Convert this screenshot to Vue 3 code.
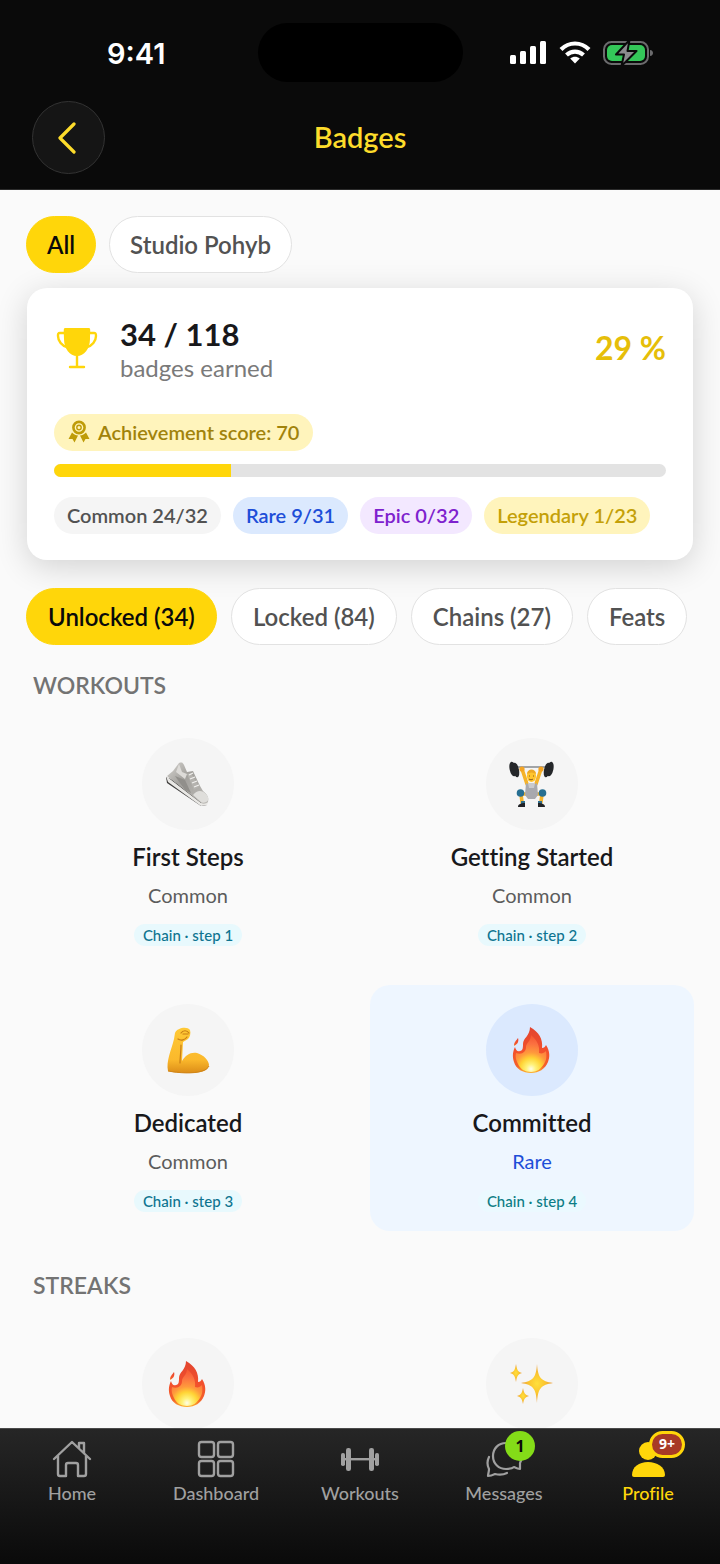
<template>
  <div class="screen">
    <svg class="defs" width="0" height="0" aria-hidden="true">
      <defs>
        <linearGradient id="flame" x1="0" y1="0" x2="0" y2="1">
          <stop offset="0" stop-color="#e2452f" />
          <stop offset="0.5" stop-color="#f2502c" />
          <stop offset="0.85" stop-color="#f4602a" />
          <stop offset="1" stop-color="#ffb42e" />
        </linearGradient>
        <radialGradient id="flame-core" gradientUnits="userSpaceOnUse" cx="23" cy="43" r="34">
          <stop offset="0" stop-color="#fffde8" />
          <stop offset="0.14" stop-color="#fff27a" />
          <stop offset="0.32" stop-color="#ffd435" />
          <stop offset="0.48" stop-color="#ff9a3c" />
          <stop offset="0.75" stop-color="#fb6f40" />
          <stop offset="1" stop-color="#f4552f" />
        </radialGradient>
        <linearGradient id="skin" x1="0" y1="0" x2="0" y2="1">
          <stop offset="0" stop-color="#ffc935" />
          <stop offset="0.7" stop-color="#fbb92c" />
          <stop offset="1" stop-color="#dc8d18" />
        </linearGradient>
        <radialGradient id="star">
          <stop offset="0" stop-color="#ffe03c" />
          <stop offset="0.5" stop-color="#fbc52f" />
          <stop offset="1" stop-color="#e89a3c" />
        </radialGradient>
        <linearGradient id="shoe-side" x1="0" y1="0" x2="1" y2="1">
          <stop offset="0" stop-color="#d6d4d0" />
          <stop offset="0.4" stop-color="#a3a19d" />
          <stop offset="1" stop-color="#bdbbb7" />
        </linearGradient>
      </defs>
      <symbol id="emoji-fire" viewBox="0 0 48 48">
        <path fill="url(#flame)" d="M22 1c9 5 13 12 12 21 2 0 3-1 4-3 4 6 4 12 2 17-3 7-9 11-17 11S8 43 6 36c-2-6-1-11 1-15 1 3 2 5 5 4 3 0 3-4 3-7 0-6 7-8 7-17z" />
        <path fill="url(#flame)" d="M10 12c1 3 0 6-4 8 0-4 2-5 4-8z" />
        <path fill="url(#flame-core)" d="M23 9c6 5 9 11 8 18 3 1 5 0 7-2 1 6 0 10-2 13-3 5-7 8-13 8s-11-3-13-8c-2-4-3-7-2-11 6 2 10-1 10-6 0-4 5-6 5-12z" />
      </symbol>
      <symbol id="emoji-shoe" viewBox="0 0 48 48">
        <path fill="#3c3b3a" d="m2 17 1 6 34 23 6-1-36-26z" />
        <path fill="#e9e8e5" d="m2 16 35 27 7-1-1 3-6 1L4 22z" />
        <path fill="url(#shoe-side)" d="M3 16 9 11l6-8c3-1 4 0 5 2l3 7 6-1c4 8 6 14 10 20 5 4 6 7 5 11-2 2-5 2-7 1z" />
        <path fill="#dddbd8" d="m15 4 3 8 5 2-2 5-9-7z" />
        <path fill="#918f8b" d="m11 16 10 4 6 13-6-3z" />
        <path fill="#b5b3af" d="m23 14 4-1 8 14-5 3z" />
        <path fill="#dfdedb" d="M29 35c4-5 9-5 13-1 3 3 3 7 0 8-2 1-4 1-5 0z" />
        <path fill="none" stroke="#f1f0ee" stroke-width="1.200" d="m25 15 4-2m-3 6 5-2m-3 6 5-2m-3 6 5-2" />
      </symbol>
      <symbol id="emoji-lifter" viewBox="0 0 48 48">
        <path stroke="#85898c" stroke-width="1.400" d="M4 7h40" />
        <g fill="#25272a">
          <ellipse cx="5" cy="9" rx="3.400" ry="7.500" transform="rotate(-12 5 9)" />
          <ellipse cx="8" cy="10" rx="3" ry="7.500" transform="rotate(-12 8 10)" />
          <ellipse cx="42" cy="9" rx="3.400" ry="7.500" transform="rotate(12 42 9)" />
          <ellipse cx="39" cy="10" rx="3" ry="7.500" transform="rotate(12 39 10)" />
        </g>
        <path fill="none" stroke="#f5b32a" stroke-width="3.600" stroke-linecap="round" stroke-linejoin="round" d="m14 9 5 15m14-15-5 15M19 34h-6l1 8m14-8h6l-1 8" />
        <circle cx="14" cy="9" r="2.600" fill="#f3a425" />
        <circle cx="33" cy="9" r="2.600" fill="#f3a425" />
        <path fill="#a8a9ae" d="M18 23c3 2 8 2 11 0l1 12-3 4h-7l-3-4z" />
        <path fill="#c9cace" d="M20 23h7l-1 5h-5z" />
        <ellipse cx="23.500" cy="16" rx="4.600" ry="6" fill="#ffc52f" />
        <path fill="#eda825" d="M19 14c0-6 9-6 9 0-3-2-6-2-9 0z" />
        <path fill="none" stroke="#8e5a18" d="M21 16h1m3 0h1m-5 3c1 1 3 1 4 0" />
        <circle cx="12.500" cy="33" r="3.800" fill="#276f92" />
        <circle cx="34.500" cy="33" r="3.800" fill="#276f92" />
        <path fill="#2e6d8b" d="M13 41h4v3h-4zm17 0h4v3h-4z" />
        <path fill="#202226" d="M10 47c0-3 3-4 7-4v4zm20-4c4 0 7 1 7 4h-7z" />
      </symbol>
      <symbol id="emoji-arm" viewBox="0 0 48 48">
        <path fill="url(#skin)" d="M11 7c2-5 12-7 15-3 1 3 0 7-2 9l-5 3-1 19c4-6 8-9 15-8 7 2 12 8 12 12-1 6-8 8-18 8-9 0-16 0-23-2-2-10 3-20 6-32z" />
        <path fill="none" stroke="#c87d15" stroke-width="1.200" stroke-linecap="round" d="M17 7c2-3 6-3 8 0m-6 1h5m-10 5c3 2 7 1 9-2m-6 8c0 7-1 12-1 18" />
        <path fill="none" stroke="#d08518" d="M4 45c11 2 25 3 34 0 4-1 6-3 7-5" />
      </symbol>
      <symbol id="emoji-sparkles" viewBox="0 0 48 48">
        <path fill="url(#star)" d="M29 4c1 14 4 17 16 19-12 2-15 5-16 20-1-15-4-18-16-20 12-2 15-5 16-19z" />
        <path fill="url(#star)" d="M8 4c1 6 2 8 6 9-4 1-5 3-6 9-1-6-2-8-6-9 4-1 5-3 6-9z" />
        <path fill="url(#star)" d="M15 28c1 5 2 7 6 8-4 1-5 3-6 8-1-5-2-7-6-8 4-1 5-3 6-8z" />
      </symbol>
    </svg>

    <header class="top">
      <div class="status">
        <span class="time">9:41</span>
        <span class="island"></span>
        <span class="indicators">
          <svg width="37" height="24" viewBox="0 0 37 24" fill="#fff">
            <rect x="0" y="14" width="6" height="9" rx="1.500" />
            <rect x="10" y="10" width="6" height="13" rx="1.500" />
            <rect x="20" y="5" width="6" height="18" rx="1.500" />
            <rect x="30" y="0" width="6" height="23" rx="1.500" />
          </svg>
          <svg width="32" height="24" viewBox="0 0 32 24" fill="none" stroke="#fff">
            <path stroke-width="4.200" d="M2 8.500C10 .5 22 .5 30 8.500" />
            <path stroke-width="4.200" d="M7.500 14c5-4.600 12-4.600 17 0" />
            <path fill="#fff" stroke="none" d="M11.200 17.600c3-2.400 6.600-2.400 9.600 0L16 22.600z" />
          </svg>
          <svg width="51" height="26" viewBox="0 0 51 26">
            <rect x="1" y="2" width="44" height="22" rx="7.500" fill="none" stroke="#6b6b6d" stroke-width="2" />
            <rect x="4" y="5" width="38" height="16" rx="5" fill="#34c759" />
            <path fill="#6b6b6d" d="M47 10c2 0 3 1.500 3 3s-1 3-3 3z" />
            <path fill="#8b8b8e" stroke="#0a0a0a" stroke-width="2" stroke-linejoin="round" d="M26.500 0 13 14.500h8L18.500 26l15-15h-9z" />
          </svg>
        </span>
      </div>
      <div class="title-bar">
        <button class="back" type="button" aria-label="Back">
          <svg width="20" height="32" viewBox="0 0 20 32" fill="none" stroke="#fddc2b" stroke-width="3.200" stroke-linecap="round" stroke-linejoin="round">
            <path d="M17 2 3 16l14 14" />
          </svg>
        </button>
        <h1>Badges</h1>
      </div>
    </header>

    <main class="content">
      <div class="chips">
        <button v-for="s in studios" :key="s" type="button" class="chip" :class="{ active: s === studio }" @click="studio = s">{{ s }}</button>
      </div>

      <section class="summary">
        <div class="summary-head">
          <svg class="trophy" width="44" height="46" viewBox="0 0 44 46">
            <path fill="#ffd60a" d="M10 3h24c2 0 1 4 1 11 0 10-6 17-13 17S9 24 9 14C9 7 8 3 10 3z" />
            <path fill="none" stroke="#ffd60a" stroke-width="2.400" stroke-linecap="round" d="M10 8H5c-2 0-2 1-2 3 0 5 4 10 9 11M34 8h5c2 0 2 1 2 3 0 5-4 10-9 11M22 30v11m-7 1h14" />
          </svg>
          <div class="count">
            <strong>{{ earned }} / {{ total }}</strong>
            <span>badges earned</span>
          </div>
          <span class="percent">{{ percent }} %</span>
        </div>
        <div class="pill score">
          <svg width="22" height="24" viewBox="0 0 22 24">
            <circle cx="11" cy="7.500" r="5.600" fill="none" stroke="#bf9c09" stroke-width="2.600" />
            <circle cx="11" cy="7.500" r="2.200" fill="none" stroke="#bf9c09" stroke-width="1.400" />
            <path fill="#bf9c09" d="M4 12.500c2 2 4 3 6 3l-3.500 7-2-3.600-4 .1zM18 12.500c-2 2-4 3-6 3l3.500 7 2-3.600 4 .1z" />
          </svg>
          Achievement score: 70
        </div>
        <div class="bar" role="progressbar" :aria-valuenow="percent" aria-valuemin="0" aria-valuemax="100">
          <div class="bar-fill" :style="{ width: percent + '%' }"></div>
        </div>
        <div class="rarities">
          <span v-for="r in rarities" :key="r.name" class="pill" :class="r.name.toLowerCase()">{{ r.name }} {{ r.count }}</span>
        </div>
      </section>

      <div class="chips filters">
        <button v-for="f in filters" :key="f" type="button" class="chip" :class="{ active: f === filter }" @click="filter = f">{{ f }}</button>
      </div>

      <section v-for="group in groups" :key="group.title" class="group">
        <h2>{{ group.title }}</h2>
        <div class="grid">
          <article v-for="b in group.badges" :key="b.icon" class="badge" :class="{ rare: b.rarity === 'Rare' }">
            <div class="medal">
              <svg width="48" height="48"><use :href="'#emoji-' + b.icon" /></svg>
            </div>
            <template v-if="b.name">
              <h3>{{ b.name }}</h3>
              <p>{{ b.rarity }}</p>
              <span class="chain">Chain · step {{ b.step }}</span>
            </template>
          </article>
        </div>
      </section>
    </main>

    <nav class="tabs">
      <a href="#home" class="tab">
        <svg width="40" height="40" viewBox="0 0 40 40" fill="none" stroke="currentColor" stroke-width="2.400" stroke-linecap="round" stroke-linejoin="round">
          <path d="M2 20 20 3l18 17M6 17v18q0 2 2 2h6V26q0-2 2-2h8q2 0 2 2v11h6q2 0 2-2V17M27 9V4h5v10" />
        </svg>
        Home
      </a>
      <a href="#dashboard" class="tab">
        <svg width="40" height="40" viewBox="0 0 40 40" fill="none" stroke="currentColor" stroke-width="2.400">
          <rect x="3" y="3" width="15" height="15" rx="2.500" />
          <rect x="22" y="3" width="15" height="15" rx="2.500" />
          <rect x="3" y="22" width="15" height="15" rx="2.500" />
          <rect x="22" y="22" width="15" height="15" rx="2.500" />
        </svg>
        Dashboard
      </a>
      <a href="#workouts" class="tab">
        <svg width="40" height="40" viewBox="0 0 40 40" fill="currentColor">
          <rect x="1" y="14" width="4" height="13" rx="1.800" />
          <rect x="6" y="9" width="5" height="23" rx="2.200" />
          <rect x="4" y="19" width="32" height="2.400" />
          <rect x="29" y="9" width="5" height="23" rx="2.200" />
          <rect x="35" y="14" width="4" height="13" rx="1.800" />
        </svg>
        Workouts
      </a>
      <a href="#messages" class="tab">
        <svg width="40" height="40" viewBox="0 0 40 40" fill="none" stroke="currentColor" stroke-width="2.200" stroke-linecap="round" stroke-linejoin="round">
          <path d="M22 4C14 4 9 10 9 17c0 8 6 13 13 13 3 0 6 0 8-2 2 1 4 2 6 2v-6c1-2 2-4 2-7C38 10 31 4 22 4z" />
          <path d="M5 18c-2 4-2 8 0 12 0 3-1 5-1 7 3 0 5-1 7-2 4 1 8 1 12-1" />
        </svg>
        <span class="count-dot">1</span>
        Messages
      </a>
      <a href="#profile" class="tab current">
        <svg width="40" height="40" viewBox="0 0 40 40" fill="currentColor">
          <circle cx="20" cy="12" r="9" />
          <path d="M4 36c0-8 7-13 16-13s17 5 17 13q0 2-2 2H6q-2 0-2-2z" />
        </svg>
        <span class="count-tag">9+</span>
        Profile
      </a>
    </nav>
  </div>
</template>

<script setup>
import { computed, ref } from 'vue'

const studios = ['All', 'Studio Pohyb']
const studio = ref('All')

const filters = ['Unlocked (34)', 'Locked (84)', 'Chains (27)', 'Feats']
const filter = ref('Unlocked (34)')

const earned = ref(34)
const total = ref(118)
const percent = computed(() => Math.round((earned.value / total.value) * 100))

const rarities = [
  { name: 'Common', count: '24/32' },
  { name: 'Rare', count: '9/31' },
  { name: 'Epic', count: '0/32' },
  { name: 'Legendary', count: '1/23' },
]

const groups = [
  {
    title: 'WORKOUTS',
    badges: [
      { name: 'First Steps', rarity: 'Common', step: 1, icon: 'shoe' },
      { name: 'Getting Started', rarity: 'Common', step: 2, icon: 'lifter' },
      { name: 'Dedicated', rarity: 'Common', step: 3, icon: 'arm' },
      { name: 'Committed', rarity: 'Rare', step: 4, icon: 'fire' },
    ],
  },
  {
    title: 'STREAKS',
    badges: [{ icon: 'fire' }, { icon: 'sparkles' }],
  },
]
</script>

<style>
body {
  background: #fafafa;
}
</style>

<style scoped>
.screen {
  display: flex;
  flex-direction: column;
  height: 100vh;
  background: #fafafa;
  color: #18181b;
  font-family: Lato, "Liberation Sans", sans-serif;
  font-variant-ligatures: none;
}
.screen * {
  box-sizing: border-box;
}
.defs {
  position: absolute;
}
svg {
  display: block;
  flex: none;
}
button {
  font: inherit;
  font-variant-ligatures: none;
  cursor: pointer;
}
h1, h2, h3, p {
  margin: 0;
}

.top {
  flex: none;
  background: #0a0a0a;
  border-bottom: 1px solid #2c2c2c;
}
.status {
  display: grid;
  grid-template-columns: 1fr 205px 1fr;
  align-items: center;
  padding-top: 23px;
}
.time {
  padding: 2px 0 0 15px;
  text-align: center;
  color: #fff;
  font: 600 29px/36px Inter, sans-serif;
}
.island {
  height: 59px;
  border-radius: 30px;
  background: #000;
}
.indicators {
  display: flex;
  justify-content: center;
  align-items: center;
  gap: 12px;
  padding-right: 18px;
}
.title-bar {
  display: grid;
  grid-template-columns: 73px 1fr 73px;
  align-items: center;
  padding: 19px 32px 15px;
}
.back {
  display: flex;
  align-items: center;
  justify-content: center;
  height: 73px;
  padding: 0 4px 0 0;
  border: 1px solid #333;
  border-radius: 50%;
  background: #151515;
}
h1 {
  padding-bottom: 2px;
  color: #fddc2b;
  font-size: 29px;
  font-weight: 600;
  line-height: 36px;
  text-align: center;
}

.content {
  flex: 1;
  min-height: 0;
  padding: 26px;
  overflow: hidden;
}
.chips {
  display: flex;
  gap: 13px;
}
.chip {
  height: 57px;
  padding: 0 20px 1px;
  border: 1px solid #e2e2e2;
  border-radius: 29px;
  background: #fff;
  color: #525252;
  font-size: 24px;
  font-weight: 600;
  white-space: nowrap;
}
.chip.active {
  border-color: #ffd60a;
  background: #ffd60a;
  color: #0a0a0a;
}
.filters {
  gap: 14px;
  margin: 28px 0 26px;
}
.filters .chip {
  padding: 0 21px 1px;
}

.summary {
  margin: 15px 1px 0;
  padding: 26px 27px;
  border-radius: 20px;
  background: #fff;
  box-shadow: 0 7px 32px rgba(0, 0, 0, 0.16);
}
.summary-head {
  display: flex;
  align-items: center;
  margin-bottom: 32px;
}
.trophy {
  margin: 0 21px 0 1px;
}
.count {
  flex: 1;
  display: flex;
  flex-direction: column;
}
.count strong,
.percent {
  font-size: 32px;
  font-weight: 700;
  line-height: 40px;
}
.count strong {
  font-size: 31px;
}
.count span {
  color: #7a7a7a;
  font-size: 24px;
  line-height: 28px;
}
.percent {
  color: #e6be09;
}
.pill {
  display: flex;
  align-items: center;
  height: 37px;
  padding: 0 13px 2px;
  border-radius: 19px;
  font-size: 20px;
  font-weight: 600;
  white-space: nowrap;
}
.score {
  width: fit-content;
  gap: 8px;
  padding: 0 14px 2px;
  background: #fff4bc;
  color: #a1830b;
}
.bar {
  height: 13px;
  margin: 13px 0 20px;
  border-radius: 7px;
  background: #e3e3e3;
  overflow: hidden;
}
.bar-fill {
  height: 100%;
  background: #ffd60a;
}
.rarities {
  display: flex;
  gap: 12px;
}
.common {
  background: #f5f5f5;
  color: #525252;
}
.pill.rare {
  background: #dbe9fe;
  color: #1d4ed8;
}
.epic {
  background: #f3e8ff;
  color: #7e22ce;
}
.legendary {
  background: #fff4bc;
  color: #c4a008;
}

.group + .group {
  margin-top: 40px;
}
h2 {
  margin: 0 7px 20px;
  color: #737373;
  font-size: 23px;
  font-weight: 600;
  line-height: 28px;
}
.grid {
  display: grid;
  grid-template-columns: 1fr 1fr;
  gap: 20px;
}
.badge {
  display: flex;
  flex-direction: column;
  align-items: center;
  padding: 19px;
  border-radius: 20px;
}
.badge.rare {
  background: #eef6ff;
}
.medal {
  display: flex;
  align-items: center;
  justify-content: center;
  width: 92px;
  height: 92px;
  border-radius: 50%;
  background: #f5f5f5;
}
.rare .medal {
  background: #dbe9fe;
}
h3 {
  margin-top: 11px;
  font-size: 24px;
  font-weight: 600;
  line-height: 32px;
}
.badge p {
  margin: 9px 0 16px;
  color: #5c5c5c;
  font-size: 20px;
  line-height: 26px;
}
.rare p {
  color: #1d4ed8;
}
.chain {
  padding: 0 9px;
  border-radius: 11px;
  background: #e8f9fd;
  color: #0e7490;
  font-size: 15px;
  font-weight: 500;
  line-height: 22px;
}
.rare .chain {
  background: #ebf9ff;
  color: #0d7d85;
}

.tabs {
  display: grid;
  grid-template-columns: repeat(5, 1fr);
  flex: none;
  height: 136px;
  padding-top: 10px;
  border-top: 1px solid #4a4a4a;
  background: linear-gradient(#262626, #0a0a0a);
}
.tab {
  position: relative;
  display: flex;
  flex-direction: column;
  align-items: center;
  gap: 2px;
  color: #a0a0a0;
  font-size: 18px;
  font-weight: 500;
  line-height: 24px;
  text-decoration: none;
}
.tab.current {
  color: #ffd60a;
}
.count-dot,
.count-tag {
  position: absolute;
  top: -8px;
  left: 50%;
  margin-left: 1px;
  font-family: "Noto Sans", sans-serif;
  font-weight: 700;
  text-align: center;
}
.count-dot {
  width: 30px;
  height: 30px;
  border-radius: 50%;
  background: #84dc18;
  color: #0a0a0a;
  font-size: 16px;
  line-height: 30px;
}
.count-tag {
  width: 36px;
  height: 27px;
  border: 3px solid #ffd60a;
  border-radius: 14px;
  background: #a83a26;
  color: #fff;
  font-size: 14px;
  line-height: 20px;
}
</style>
